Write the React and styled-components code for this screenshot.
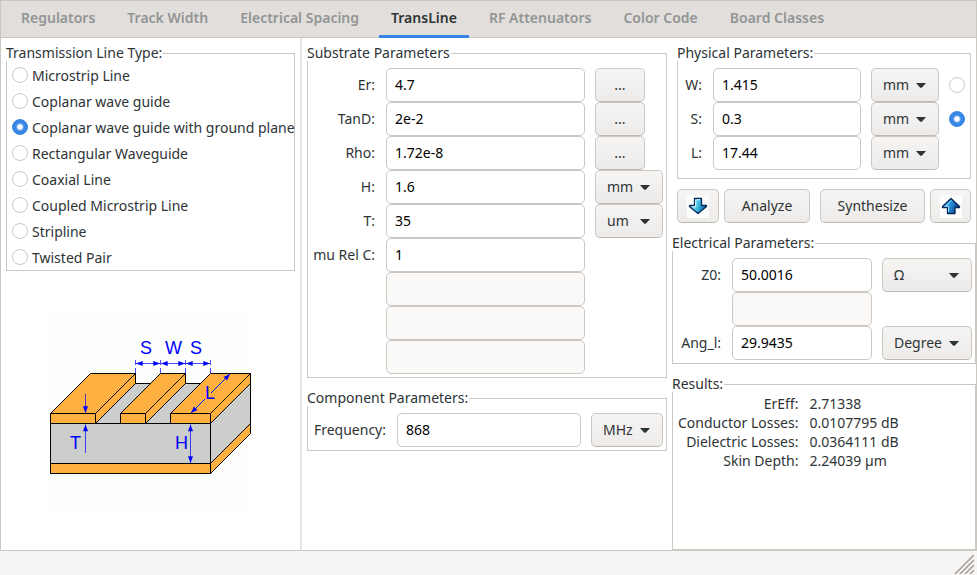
import React from 'react';
import styled, { createGlobalStyle, css } from 'styled-components';

const line = '#cdc7c2';
const ink = '#2e3436';
const accent = '#3584e4';

const GlobalStyle = createGlobalStyle`
  *, *::before, *::after { box-sizing: border-box; }
  body { margin: 0; }
  body, button, input, select, fieldset, legend {
    font-family: 'Noto Sans', 'Open Sans', sans-serif;
    font-size: 14px;
    color: ${ink};
  }
`;

const Window = styled.div`
  display: flex;
  flex-direction: column;
  min-height: 100vh;
  background: #f6f5f4;
`;

const Notebook = styled.div`
  flex: 1;
  display: flex;
  flex-direction: column;
  border: 1px solid ${line};
  background: #ffffff;
`;

const TabBar = styled.nav`
  display: flex;
  gap: 8px;
  height: 37px;
  padding-left: 8px;
  background: #e1dedb;
  border-bottom: 1px solid ${line};
`;

const Tab = styled.button`
  height: 37px;
  padding: 0 12px;
  border: 0;
  border-bottom: 3px solid ${(p) => (p.$active ? accent : 'transparent')};
  background: transparent;
  background-clip: padding-box;
  color: ${(p) => (p.$active ? ink : '#929595')};
  font-weight: 600;
  line-height: 34px;
  white-space: nowrap;
`;

const Columns = styled.main`
  flex: 1;
  display: grid;
  grid-template-columns: minmax(0, 299fr) 2px minmax(0, 370fr) minmax(0, 304fr);
`;

const TypeColumn = styled.section`
  display: flex;
  flex-direction: column;
  padding: 7px 5px 0;
`;

const Splitter = styled.div`
  background: #e6e5e4;
`;

const MiddleColumn = styled.section`
  display: flex;
  flex-direction: column;
  gap: 12px;
  padding: 7px 5px 0;
`;

const RightColumn = styled.section`
  display: flex;
  flex-direction: column;
  gap: 12px;
  padding-top: 7px;
`;

const Inset = styled.div`
  display: flex;
  flex-direction: column;
  gap: 10px;
  padding: 0 5px;
`;

const Group = styled.fieldset`
  min-width: 0;
  margin: 0;
  padding: ${(p) => p.$pad};
  border: 1px solid ${line};
  ${(p) => p.$grow && css`flex: 1;`}
`;

const Legend = styled.legend`
  margin-left: -6px;
  padding: 0 1px 0 0;
  background: #ffffff;
  line-height: 16px;
`;

const RadioRow = styled.label`
  display: flex;
  align-items: center;
  gap: 4px;
  height: 26px;
  white-space: nowrap;
`;

const Radio = styled.input.attrs({ type: 'radio' })`
  appearance: none;
  flex: none;
  width: 16px;
  height: 16px;
  margin: 0;
  border: 1px solid ${line};
  border-radius: 50%;
  background: #ffffff;
  &:checked {
    border-color: ${accent};
    background: radial-gradient(circle, #ffffff 0 2px, #3b88e8 4px, ${accent} 8px);
  }
`;

const Picture = styled.div`
  flex: 1;
  display: flex;
  align-items: center;
  justify-content: center;
`;

const Fields = styled.div`
  display: grid;
  grid-template-columns: ${(p) => p.$cols};
  grid-auto-rows: 34px;
  column-gap: 10px;
  align-items: center;
`;

const Label = styled.label`
  padding: 0 1px 2px 0;
  text-align: right;
  white-space: nowrap;
`;

const Entry = styled.input.attrs({ type: 'text' })`
  grid-column: 2;
  width: 100%;
  min-width: 0;
  height: 34px;
  padding: 0 8px 2px;
  border: 1px solid ${line};
  border-radius: 5px;
  background: #ffffff;
  color: #000000;
  &:disabled { background: #faf9f8; }
`;

const raised = css`
  height: 34px;
  border: 1px solid ${line};
  border-bottom-color: #bfb8b1;
  border-radius: 5px;
  background: linear-gradient(#f6f5f4, #edebe9);
`;

const Button = styled.button`
  ${raised}
  display: flex;
  align-items: center;
  justify-content: center;
  width: ${(p) => p.$width};
  padding: 0 0 2px;
`;

const IconButton = styled(Button)`
  padding: 0;
`;

const ActionPair = styled.div`
  display: flex;
  gap: 5px;
`;

const ActionBar = styled.div`
  display: flex;
  justify-content: space-between;
`;

const Picker = styled.span`
  position: relative;
  display: block;
`;

const Select = styled.select`
  ${raised}
  appearance: none;
  display: block;
  width: 100%;
  padding: 0 26px 2px 11px;
`;

const Caret = styled.svg`
  position: absolute;
  right: 13px;
  top: 15px;
  pointer-events: none;
`;

const Results = styled.table`
  border-collapse: collapse;
  th, td {
    height: 19px;
    padding: 0;
    line-height: 19px;
    font-weight: 400;
    text-align: left;
    white-space: nowrap;
  }
  th {
    width: 120px;
    padding-right: 1px;
    text-align: right;
  }
  td { padding-left: 10px; }
`;

const StatusBar = styled.footer`
  display: flex;
  justify-content: flex-end;
  align-items: flex-end;
  height: 24px;
  padding: 0 3px 1px;
`;

function UnitPicker({ label, value, options }) {
  return (
    <Picker>
      <Select aria-label={label} defaultValue={value}>
        {options.map((o) => <option key={o}>{o}</option>)}
      </Select>
      <Caret width="10" height="5" viewBox="0 0 10 5">
        <path d="M0 0H10L6 4.5Q5 5.2 4 4.5Z" fill={ink} />
      </Caret>
    </Picker>
  );
}

function ArrowIcon({ up }) {
  return (
    <svg width="22" height="23" viewBox="0 0 22 23" aria-hidden="true">
      <defs>
        <linearGradient id={up ? 'arrowUp' : 'arrowDown'} x1="0" x2="1" y1="0" y2="0.3">
          <stop offset="0.2" stopColor={up ? '#5cc4f0' : '#a8ecf8'} />
          <stop offset="0.55" stopColor={up ? '#2b8fdc' : '#45c3e6'} />
          <stop offset="1" stopColor={up ? '#0a3f8c' : '#0d6fa8'} />
        </linearGradient>
      </defs>
      <rect width="22" height="23" fill="#fcfefb" />
      <path
        d={up
          ? 'M11 3.5L19.5 11.5V12.5H15V18.5H7.500V12.500H2.500V11.500Z'
          : 'M7.500 3.500H14.500V10.500H19.500V11.500L11 18.500L2.500 11.500V10.500H7.500Z'}
        fill={`url(#${up ? 'arrowUp' : 'arrowDown'})`}
        stroke="#06265a"
        strokeWidth="1.3"
        strokeLinejoin="round"
      />
      <path
        d={up ? 'M11 5.500L5.500 11.500H8.500V17' : 'M8.700 4.700V11.700H5.500M9.500 4.700H13'}
        fill="none"
        stroke={up ? '#8fdcf8' : '#d8f8fc'}
      />
    </svg>
  );
}

const orange = '#ffb040';
const gray = '#cccecb';

function WaveguideDrawing() {
  const strips = [[1.5, 46.5], [71.5, 96.5], [121.5, 161.5]];
  const dimensions = ['M87 54.5H111', 'M112 54.5H136', 'M137 54.5H161', 'M141.5 115.5V154'];
  return (
    <svg width="203" height="203" viewBox="0 0 203 203" role="img" aria-label="Coplanar wave guide with ground plane">
      <defs>
        <marker id="tip" viewBox="0 0 8 6" refX="8" refY="3" markerWidth="8" markerHeight="5" orient="auto-start-reverse" markerUnits="userSpaceOnUse">
          <path d="M0 0L8 3L0 6Z" fill="#0000ff" />
        </marker>
      </defs>
      <rect width="203" height="203" fill="#fdfffc" />
      <g stroke="#000000" strokeWidth="1" strokeLinejoin="round">
        <path d="M1.500 114.500L41.500 74.500H201.500L161.500 114.500Z" fill={gray} />
        <path d="M161.500 114.500L201.500 74.500V114.500L161.500 154.500Z" fill={gray} />
        <path d="M161.500 154.500L201.500 114.500V124.500L161.500 164.500Z" fill={orange} />
        <rect x="1.500" y="114.500" width="160" height="40" fill={gray} />
        <rect x="1.500" y="154.500" width="160" height="10" fill={orange} />
        {strips.map(([a, b]) => (
          <g key={a} fill={orange}>
            <path d={`M${a} 104.500L${a + 40} 64.500H${b + 40}L${b} 104.500Z`} />
            <path d={`M${b} 104.500L${b + 40} 64.500V74.500L${b} 114.500Z`} />
            <rect x={a} y="104.500" width={b - a} height="10" />
          </g>
        ))}
      </g>
      <g stroke="#0000ff" strokeWidth="1" fill="none">
        <path d="M86.500 51V64M111.500 51V64M136.500 51V64M161.500 51V64" strokeDasharray="5 3" strokeOpacity="0.7" />
        {dimensions.map((d) => (
          <path key={d} d={d} markerStart="url(#tip)" markerEnd="url(#tip)" strokeOpacity="0.7" />
        ))}
        <path d="M36.500 85V104" markerEnd="url(#tip)" strokeOpacity="0.7" />
        <path d="M36.500 144V115.500" markerEnd="url(#tip)" strokeOpacity="0.7" />
        <path d="M156 90L142 104" markerEnd="url(#tip)" />
        <path d="M162 84L181 65" markerEnd="url(#tip)" />
      </g>
      <g fill="#0000ff" fontFamily="'Liberation Sans', Arial, sans-serif" fontSize="18">
        <text x="91" y="45">S</text>
        <text x="116" y="45">W</text>
        <text x="141" y="45">S</text>
        <text x="21" y="140">T</text>
        <text x="126" y="140">H</text>
        <text x="156" y="90">L</text>
      </g>
    </svg>
  );
}

const tabs = ['Regulators', 'Track Width', 'Electrical Spacing', 'TransLine', 'RF Attenuators', 'Color Code', 'Board Classes'];
const lineTypes = [
  'Microstrip Line', 'Coplanar wave guide', 'Coplanar wave guide with ground plane', 'Rectangular Waveguide',
  'Coaxial Line', 'Coupled Microstrip Line', 'Stripline', 'Twisted Pair',
];
const lengths = ['mm', 'um', 'cm', 'mil', 'inch'];
const substrate = [
  { id: 'er', label: 'Er:', value: '4.7', more: true },
  { id: 'tand', label: 'TanD:', value: '2e-2', more: true },
  { id: 'rho', label: 'Rho:', value: '1.72e-8', more: true },
  { id: 'h', label: 'H:', value: '1.6', unit: 'mm' },
  { id: 't', label: 'T:', value: '35', unit: 'um' },
  { id: 'mu', label: 'mu Rel C:', value: '1' },
];
const physical = [
  { id: 'w', label: 'W:', value: '1.415', pick: true },
  { id: 's', label: 'S:', value: '0.3', pick: true, picked: true },
  { id: 'l', label: 'L:', value: '17.44' },
];
const results = [
  ['ErEff:', '2.71338'],
  ['Conductor Losses:', '0.0107795 dB'],
  ['Dielectric Losses:', '0.0364111 dB'],
  ['Skin Depth:', '2.24039 µm'],
];

export default function App() {
  return (
    <Window>
      <GlobalStyle />
      <Notebook>
        <TabBar>
          {tabs.map((t) => <Tab key={t} type="button" $active={t === 'TransLine'}>{t}</Tab>)}
        </TabBar>
        <Columns>
          <TypeColumn>
            <Group $pad="1px 0 0 5px">
              <Legend>Transmission Line Type:</Legend>
              {lineTypes.map((t, i) => (
                <RadioRow key={t}>
                  <Radio name="lineType" defaultChecked={i === 2} />
                  {t}
                </RadioRow>
              ))}
            </Group>
            <Picture><WaveguideDrawing /></Picture>
          </TypeColumn>
          <Splitter />
          <MiddleColumn>
            <Group $pad="7px 3px 3px 5px">
              <Legend>Substrate Parameters</Legend>
              <Fields $cols="63px minmax(0, 1fr) 68px">
                {substrate.map((f) => (
                  <React.Fragment key={f.id}>
                    <Label htmlFor={f.id}>{f.label}</Label>
                    <Entry id={f.id} defaultValue={f.value} />
                    {f.more && <Button type="button" $width="50px" aria-label={`Choose ${f.label}`}>...</Button>}
                    {f.unit && <UnitPicker label={`${f.label} unit`} value={f.unit} options={lengths} />}
                    {!f.more && !f.unit && <span />}
                  </React.Fragment>
                ))}
                <Entry disabled aria-label="Unused parameter 1" />
                <Entry disabled aria-label="Unused parameter 2" />
                <Entry disabled aria-label="Unused parameter 3" />
              </Fields>
            </Group>
            <Group $pad="7px 3px 3px 5px">
              <Legend>Component Parameters:</Legend>
              <Fields $cols="74px minmax(0, 1fr) 72px">
                <Label htmlFor="frequency">Frequency:</Label>
                <Entry id="frequency" defaultValue="868" />
                <UnitPicker label="Frequency unit" value="MHz" options={['GHz', 'MHz', 'kHz']} />
              </Fields>
            </Group>
          </MiddleColumn>
          <RightColumn>
            <Inset>
              <Group $pad="7px 5px 8px 5px">
                <Legend>Physical Parameters:</Legend>
                <Fields $cols="20px minmax(0, 1fr) 68px 16px">
                  {physical.map((f) => (
                    <React.Fragment key={f.id}>
                      <Label htmlFor={f.id}>{f.label}</Label>
                      <Entry id={f.id} defaultValue={f.value} />
                      <UnitPicker label={`${f.label} unit`} value="mm" options={lengths} />
                      {f.pick ? <Radio name="synthesisTarget" defaultChecked={f.picked} aria-label={`Synthesize ${f.label}`} /> : <span />}
                    </React.Fragment>
                  ))}
                </Fields>
              </Group>
              <ActionBar>
                <ActionPair>
                  <IconButton type="button" $width="42px" aria-label="Analyze down"><ArrowIcon /></IconButton>
                  <Button type="button" $width="86px">Analyze</Button>
                </ActionPair>
                <ActionPair>
                  <Button type="button" $width="105px">Synthesize</Button>
                  <IconButton type="button" $width="41px" aria-label="Synthesize up"><ArrowIcon up /></IconButton>
                </ActionPair>
              </ActionBar>
            </Inset>
            <Group $pad="7px 3px 3px 5px">
              <Legend>Electrical Parameters:</Legend>
              <Fields $cols="44px minmax(0, 1fr) 90px">
                <Label htmlFor="z0">Z0:</Label>
                <Entry id="z0" defaultValue="50.0016" />
                <UnitPicker label="Z0 unit" value="Ω" options={['Ω', 'kΩ']} />
                <Entry disabled aria-label="Unused electrical parameter" />
                <span />
                <Label htmlFor="ang">Ang_l:</Label>
                <Entry id="ang" defaultValue="29.9435" />
                <UnitPicker label="Ang_l unit" value="Degree" options={['Radian', 'Degree']} />
              </Fields>
            </Group>
            <Group $pad="2px 3px 3px 5px" $grow>
              <Legend>Results:</Legend>
              <Results>
                <tbody>
                  {results.map(([k, v]) => <tr key={k}><th scope="row">{k}</th><td>{v}</td></tr>)}
                </tbody>
              </Results>
            </Group>
          </RightColumn>
        </Columns>
      </Notebook>
      <StatusBar>
        <svg width="20" height="20" viewBox="0 0 20 20" aria-hidden="true">
          <path d="M1 20L20 1M6 20L20 6M11 20L20 11M16 20L20 16" stroke="#a09d99" strokeWidth="1.500" />
        </svg>
      </StatusBar>
    </Window>
  );
}
